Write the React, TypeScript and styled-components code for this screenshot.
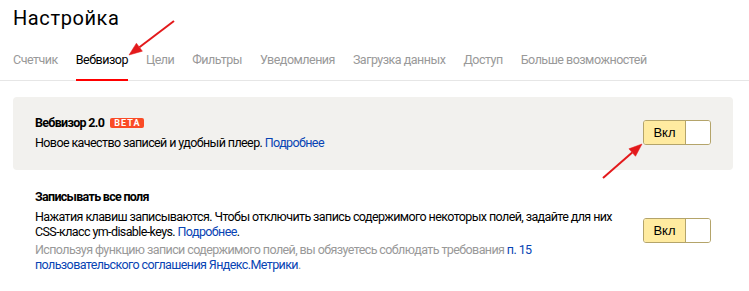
import React from "react";
import styled, { createGlobalStyle } from "styled-components";

const Global = createGlobalStyle`
  html, body { margin: 0; padding: 0; background: #fff; }
  body { font-family: Roboto, "Liberation Sans", Arial, sans-serif; color: #000; }
`;

const Page = styled.div`
  position: relative;
  width: 749px;
  height: 291px;
  overflow: hidden;
`;

const Title = styled.h1`
  margin: 0;
  padding: 4px 13px 0;
  font-size: 20px;
  font-weight: 400;
  line-height: 28px;
  letter-spacing: 0.6px;
`;

const Tabs = styled.nav`
  display: flex;
  gap: 18px;
  padding: 20px 13px 0;
  border-bottom: 1px solid #e6e6e6;
`;

const Tab = styled.span<{ $active?: boolean }>`
  font-size: 12.5px;
  letter-spacing: -0.5px;
  line-height: 16px;
  padding-bottom: 11px;
  color: ${(p) => (p.$active ? "#000" : "#999")};
  border-bottom: 2px solid ${(p) => (p.$active ? "#f00" : "transparent")};
  margin-bottom: -1px;
`;

const Cards = styled.div`
  display: flex;
  flex-direction: column;
  padding-top: 16px;
`;

const Card = styled.section<{ $shaded?: boolean }>`
  display: flex;
  align-items: center;
  justify-content: space-between;
  margin: 0 16px 0 13px;
  padding: ${(p) => (p.$shaded ? "18px 22px 20px" : "19px 22px")};
  background: ${(p) => (p.$shaded ? "#f2f1ee" : "transparent")};
  border-radius: 4px;
`;

const Info = styled.div`
  display: flex;
  flex-direction: column;
`;

const Heading = styled.div`
  display: flex;
  align-items: center;
  gap: 6px;
  font-size: 12.5px;
  letter-spacing: -0.7px;
  font-weight: 700;
  line-height: 16px;
  margin-bottom: 4px;
`;

const Badge = styled.span`
  display: inline-block;
  background: #fa4b26;
  color: #fff;
  font-size: 9px;
  font-weight: 700;
  letter-spacing: 1.1px;
  line-height: 10px;
  padding: 0 3px 0 4px;
  border-radius: 2px;
`;

const Text = styled.p<{ $muted?: boolean }>`
  margin: 0;
  font-size: 12.5px;
  line-height: 15px;
  letter-spacing: -0.6px;
  color: ${(p) => (p.$muted ? "#999" : "#000")};
  & + & { margin-top: 3px; }
`;

const Link = styled.a`
  color: #0844b4;
  text-decoration: none;
`;

const Toggle = styled.div`
  display: flex;
  width: 68px;
  height: 25px;
  box-sizing: border-box;
  border: 1px solid #b4a46a;
  border-radius: 3px;
  overflow: hidden;
  flex-shrink: 0;
`;

const ToggleLabel = styled.span`
  flex: 1;
  display: flex;
  align-items: center;
  justify-content: center;
  background: #ffeba0;
  font-family: Arial, "Liberation Sans", sans-serif;
  font-size: 13px;
`;

const Knob = styled.span`
  width: 24px;
  background: #fff;
  border-left: 1px solid #b4a46a;
`;

const Overlay = styled.svg`
  position: absolute;
  left: 0;
  top: 0;
  pointer-events: none;
`;

const tabs = [
  "Счетчик",
  "Вебвизор",
  "Цели",
  "Фильтры",
  "Уведомления",
  "Загрузка данных",
  "Доступ",
  "Больше возможностей",
];

const Switch = () => (
  <Toggle>
    <ToggleLabel>Вкл</ToggleLabel>
    <Knob />
  </Toggle>
);

export default function App() {
  return (
    <Page>
      <Global />
      <Title>Настройка</Title>
      <Tabs>
        {tabs.map((t) => (
          <Tab key={t} $active={t === "Вебвизор"}>
            {t}
          </Tab>
        ))}
      </Tabs>
      <Cards>
        <Card $shaded>
          <Info>
            <Heading>
              Вебвизор 2.0 <Badge>BETA</Badge>
            </Heading>
            <Text>
              Новое качество записей и удобный плеер. <Link>Подробнее</Link>
            </Text>
          </Info>
          <Switch />
        </Card>
        <Card>
          <Info>
            <Heading>Записывать все поля</Heading>
            <Text>
              Нажатия клавиш записываются. Чтобы отключить запись содержимого некоторых полей, задайте для них
              <br />
              CSS-класс ym-disable-keys. <Link>Подробнее</Link>.
            </Text>
            <Text $muted>
              Используя функцию записи содержимого полей, вы обязуетесь соблюдать требования <Link>п. 15</Link>
              <br />
              <Link>пользовательского соглашения Яндекс.Метрики</Link>.
            </Text>
          </Info>
          <Switch />
        </Card>
      </Cards>
      <Overlay width="749" height="291" viewBox="0 0 749 291">
        <g fill="#e3191b" stroke="#e3191b">
          <line x1="174" y1="21" x2="139.4" y2="47.2" strokeWidth="2" />
          <polygon points="129,55 142.4,51.2 136.4,43.2" strokeWidth="0.5" />
          <line x1="603" y1="178" x2="632.2" y2="152.5" strokeWidth="2" />
          <polygon points="642,144 635.5,156.3 628.9,148.8" strokeWidth="0.5" />
        </g>
      </Overlay>
    </Page>
  );
}
